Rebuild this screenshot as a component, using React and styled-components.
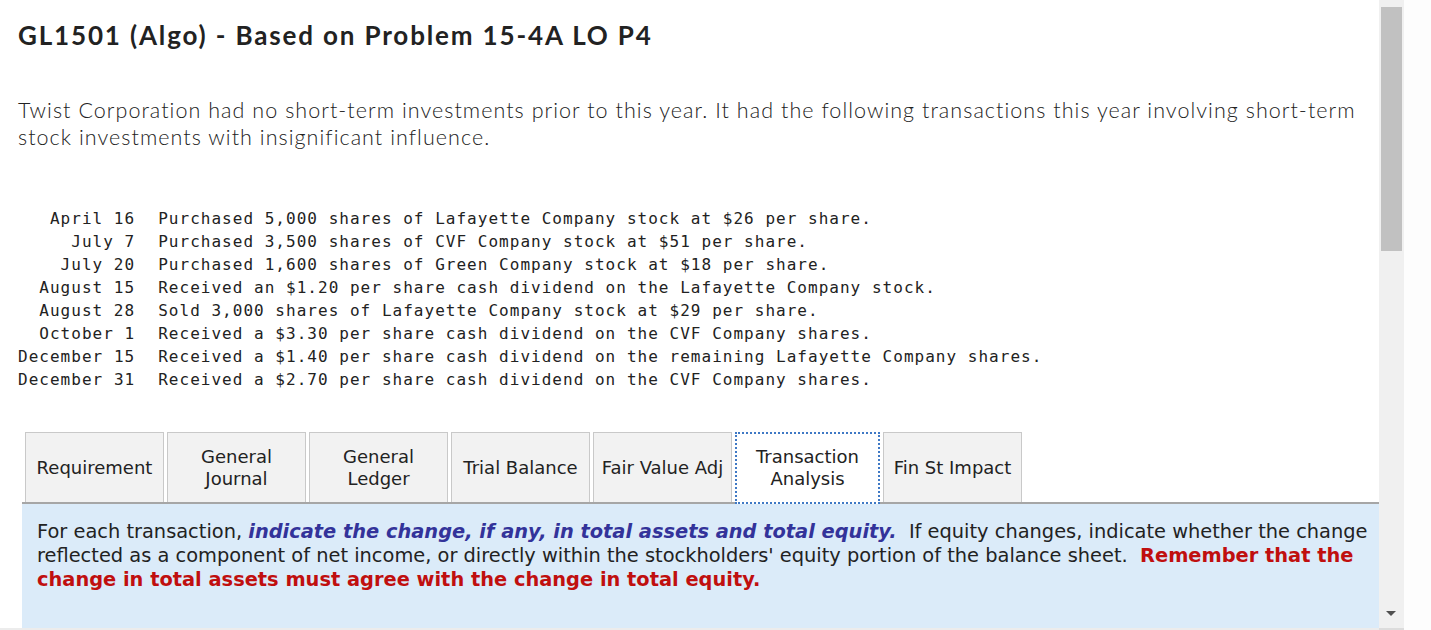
import React from "react";
import styled, { createGlobalStyle } from "styled-components";

const GlobalStyle = createGlobalStyle`
  html, body {
    margin: 0;
    padding: 0;
    background: #ffffff;
    overflow: hidden;
  }
`;

const Page = styled.div`
  display: flex;
  width: 1431px;
  height: 630px;
  background: #fdfdfd;
`;

const Content = styled.div`
  width: 1379px;
  height: 628px;
  overflow: hidden;
  background: #ffffff;
  border-bottom: 2px solid #ececec;
`;

const Header = styled.div`
  padding: 18px 14px 0 18px;
`;

const Title = styled.h1`
  margin: 0;
  font-family: "Lato", "Open Sans", sans-serif;
  font-weight: 700;
  font-size: 26px;
  letter-spacing: 1.85px;
  line-height: 34px;
  color: #222;
`;

const Intro = styled.p`
  margin: 45px 0 0 0;
  font-family: "Lato", "Open Sans", sans-serif;
  font-weight: 300;
  font-size: 21.5px;
  letter-spacing: 1.05px;
  line-height: 27px;
  color: #222;
`;

const TxTable = styled.table`
  margin-top: 56px;
  border-collapse: collapse;
  font-family: "DejaVu Sans Mono", "Liberation Mono", monospace;
  font-size: 16px;
  letter-spacing: 1.02px;
  color: #222;
  td {
    padding: 0;
    height: 23px;
    white-space: pre;
    vertical-align: middle;
  }
`;

const DateCell = styled.td`
  text-align: right;
  padding-right: 23px !important;
`;

const Tabs = styled.div`
  display: flex;
  align-items: flex-end;
  gap: 3px;
  margin: 41px 0 0 22px;
  padding-left: 3px;
  border-bottom: 2px solid #a6a6a6;
  height: 70px;
`;

const Tab = styled.div`
  box-sizing: border-box;
  height: ${(p) => (p.$active ? "72px" : "70px")};
  margin-bottom: ${(p) => (p.$active ? "-2px" : "0")};
  min-width: ${(p) => (p.$active ? "145px" : "139px")};
  padding: 0 6px;
  display: flex;
  align-items: center;
  justify-content: center;
  text-align: center;
  font-family: "DejaVu Sans", "Liberation Sans", sans-serif;
  font-size: 18px;
  line-height: 22px;
  color: #222;
  background: ${(p) => (p.$active ? "#ffffff" : "#f2f2f2")};
  border: ${(p) => (p.$active ? "2px dotted #3f79c5" : "1px solid #c9c9c9")};
  border-bottom: ${(p) => (p.$active ? "2px dotted #3f79c5" : "none")};
`;

const Panel = styled.div`
  margin-left: 22px;
  height: 130px;
  background: #dbebf9;
  padding: 16px 2px 0 15px;
  font-family: "DejaVu Sans", "Liberation Sans", sans-serif;
  font-size: 19.4px;
  line-height: 24px;
  color: #222;
`;

const Emph = styled.b`
  font-style: italic;
  color: #33339a;
`;

const Warn = styled.b`
  color: #c00f0f;
`;

const ScrollTrack = styled.div`
  width: 25px;
  height: 628px;
  background: #f0f0f0;
  position: relative;
  border-bottom: 2px solid #dcdcdc;
`;

const Thumb = styled.div`
  position: absolute;
  left: 2px;
  top: 7px;
  width: 21px;
  height: 244px;
  background: #c1c1c1;
`;

const Arrow = styled.div`
  position: absolute;
  left: 7px;
  bottom: 12px;
  width: 0;
  height: 0;
  border-left: 5px solid transparent;
  border-right: 5px solid transparent;
  border-top: 5px solid #505050;
`;

const rows = [
  ["April 16", "Purchased 5,000 shares of Lafayette Company stock at $26 per share."],
  ["July 7", "Purchased 3,500 shares of CVF Company stock at $51 per share."],
  ["July 20", "Purchased 1,600 shares of Green Company stock at $18 per share."],
  ["August 15", "Received an $1.20 per share cash dividend on the Lafayette Company stock."],
  ["August 28", "Sold 3,000 shares of Lafayette Company stock at $29 per share."],
  ["October 1", "Received a $3.30 per share cash dividend on the CVF Company shares."],
  ["December 15", "Received a $1.40 per share cash dividend on the remaining Lafayette Company shares."],
  ["December 31", "Received a $2.70 per share cash dividend on the CVF Company shares."],
];

const tabs = [
  ["Requirement"],
  ["General", "Journal"],
  ["General", "Ledger"],
  ["Trial Balance"],
  ["Fair Value Adj"],
  ["Transaction", "Analysis"],
  ["Fin St Impact"],
];

export default function App() {
  return (
    <>
      <GlobalStyle />
      <Page>
        <Content>
          <Header>
            <Title>GL1501 (Algo) - Based on Problem 15-4A LO P4</Title>
            <Intro>
              Twist Corporation had no short-term investments prior to this year. It had the
              following transactions this year involving short&#8209;term stock investments with
              insignificant influence.
            </Intro>
            <TxTable>
              <tbody>
                {rows.map(([d, t]) => (
                  <tr key={d}>
                    <DateCell>{d}</DateCell>
                    <td>{t}</td>
                  </tr>
                ))}
              </tbody>
            </TxTable>
          </Header>
          <Tabs>
            {tabs.map((lines, i) => (
              <Tab key={i} $active={i === 5}>
                <div>
                  {lines.map((l) => (
                    <div key={l}>{l}</div>
                  ))}
                </div>
              </Tab>
            ))}
          </Tabs>
          <Panel>
            For each transaction,{" "}
            <Emph>indicate the change, if any, in total assets and total equity.</Emph>
            {"\u00a0 "}If equity changes, indicate whether the change reflected as a component of
            net income, or directly within the stockholders' equity portion of the balance
            sheet.{"\u00a0 "}
            <Warn>
              Remember that the change in total assets must agree with the change in total
              equity.
            </Warn>
          </Panel>
        </Content>
        <ScrollTrack>
          <Thumb />
          <Arrow />
        </ScrollTrack>
      </Page>
    </>
  );
}
